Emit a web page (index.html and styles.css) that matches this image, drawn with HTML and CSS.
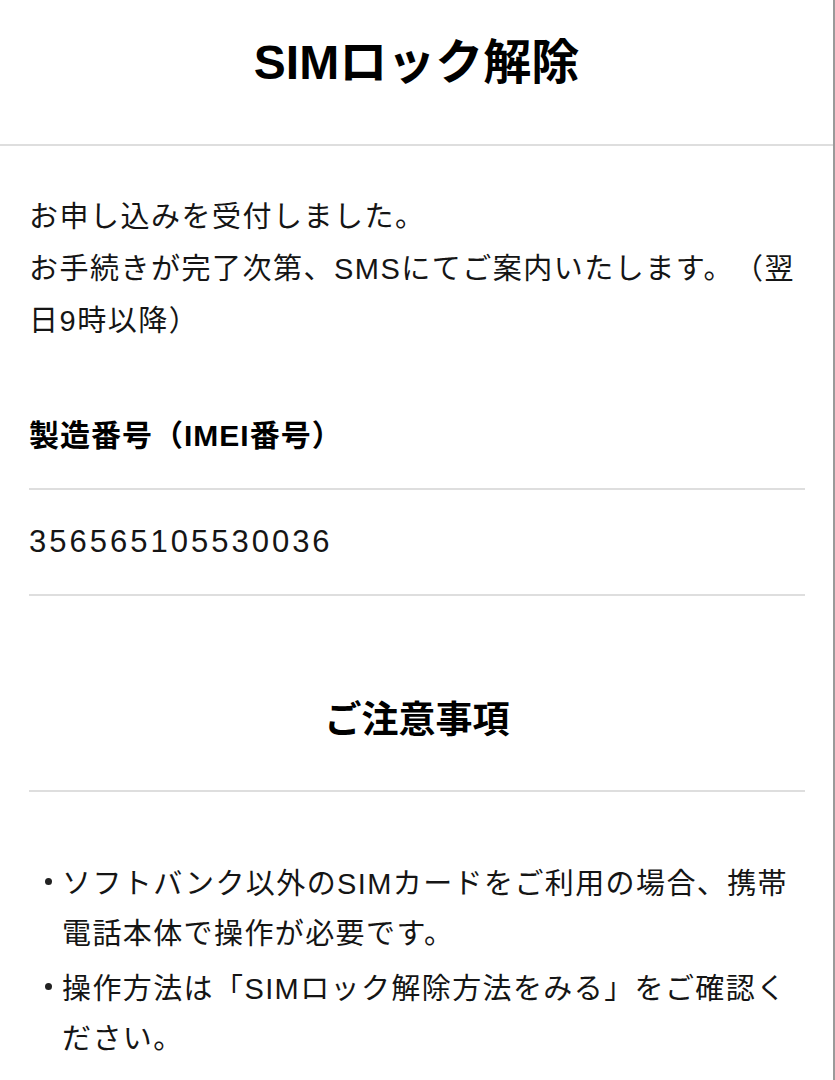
FILE: index.html
```html
<!DOCTYPE html>
<html lang="ja">
<head>
<meta charset="utf-8">
<title>SIMロック解除</title>
<link rel="stylesheet" href="styles.css">
</head>
<body>
<div class="page">
  <header class="header">
    <h1 class="title">SIMロック解除</h1>
  </header>
  <main class="content">
    <p class="message">お申し込みを受付しました。<br>お手続きが完了次第、SMSにてご案内いたします。（翌日9時以降）</p>

    <section class="field">
      <h2 class="field-label">製造番号（IMEI番号）</h2>
      <p class="field-value">356565105530036</p>
    </section>

    <section class="notes">
      <h2 class="notes-title">ご注意事項</h2>
      <ul class="notes-list">
        <li>ソフトバンク以外のSIMカードをご利用の場合、携帯電話本体で操作が必要です。</li>
        <li>操作方法は「SIMロック解除方法をみる」をご確認ください。</li>
      </ul>
    </section>
  </main>
</div>
</body>
</html>
```
FILE: styles.css
```css
html, body {
  margin: 0;
  padding: 0;
  background: #fff;
}

body {
  font-family: "Liberation Sans", "Noto Sans CJK JP", sans-serif;
  color: #151515;
  text-spacing-trim: space-all;
}

.page {
  box-sizing: border-box;
  width: 835px;
  min-height: 1080px;
  border-right: 2px solid #9a9a9a;
}

/* top bar with the page title */
.header {
  height: 144px;
  border-bottom: 2px solid #dedede;
  display: flex;
  align-items: center;
  justify-content: center;
}

.title {
  margin: 0;
  font-size: 48px;
  font-weight: 700;
  line-height: 1;
  color: #000;
  padding-bottom: 18px;
}

.content {
  padding: 0 28px 0 29px;
}

.message {
  margin: 45px 0 0;
  font-size: 29px;
  letter-spacing: 1.5px;
  line-height: 52px;
}

/* IMEI block */
.field {
  margin-top: 63px;
}

.field-label {
  margin: 0;
  padding-bottom: 26px;
  border-bottom: 2px solid #dedede;
  font-size: 30px;
  letter-spacing: 1px;
  font-weight: 700;
  line-height: 52px;
  color: #000;
}

.field-value {
  margin: 0;
  padding: 26px 0;
  border-bottom: 2px solid #dedede;
  font-size: 31px;
  letter-spacing: 3px;
  line-height: 52px;
}

/* notes */
.notes {
  margin-top: 99px;
}

.notes-title {
  margin: 0;
  padding-bottom: 43px;
  border-bottom: 2px solid #dedede;
  text-align: center;
  font-size: 37px;
  font-weight: 700;
  line-height: 52px;
  color: #000;
}

.notes-list {
  list-style: none;
  margin: 67px 0 0;
  padding: 0 3px 0 33px;
}

.notes-list li {
  position: relative;
  font-size: 29px;
  letter-spacing: 1.4px;
  line-height: 50px;
  margin-bottom: 5px;
}

.notes-list li::before {
  content: "";
  position: absolute;
  left: -17px;
  top: 19px;
  width: 7px;
  height: 7px;
  border-radius: 50%;
  background: #222;
}
```
